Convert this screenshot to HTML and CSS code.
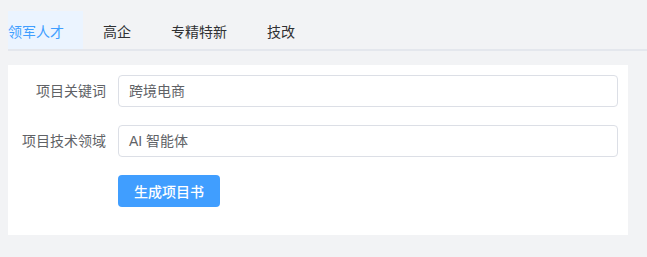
FILE: index.html
```html
<!DOCTYPE html>
<html lang="zh-CN">
<head>
<meta charset="utf-8">
<title>项目书生成</title>
<link rel="stylesheet" href="styles.css">
</head>
<body>
  <div class="page">
    <div class="tabs">
      <div class="tab active">领军人才</div>
      <div class="tab">高企</div>
      <div class="tab">专精特新</div>
      <div class="tab">技改</div>
    </div>
    <div class="card">
      <div class="form-item">
        <label class="label">项目关键词</label>
        <div class="input">跨境电商</div>
      </div>
      <div class="form-item">
        <label class="label">项目技术领域</label>
        <div class="input">AI 智能体</div>
      </div>
      <div class="form-item">
        <span class="label"></span>
        <button class="btn">生成项目书</button>
      </div>
    </div>
  </div>
</body>
</html>
```

FILE: styles.css
```css
html, body {
  margin: 0;
  padding: 0;
  background: #f2f3f5;
}
body {
  font-family: "Liberation Sans", "Noto Sans CJK SC", sans-serif;
  font-size: 14px;
  color: #303133;
}
.page {
  padding: 11px 19px 0 8px;
}
.tabs {
  display: flex;
  height: 40px;
  box-shadow: inset 0 -2px 0 #e4e7ed;
  margin-right: -19px;
}
.tab {
  height: 40px;
  line-height: 42px;
  padding: 0 20px;
  box-sizing: border-box;
  white-space: nowrap;
  color: #303133;
}
.tab:first-child {
  padding-left: 0;
  padding-right: 19px;
}
.tab.active {
  color: #409eff;
  background-color: #ebf4ff;
  box-shadow: inset 0 -2px 0 #e4e7ed;
  background-image: linear-gradient(#409eff, #409eff);
  background-size: 56px 2px;
  background-position: left bottom;
  background-repeat: no-repeat;
}
.card {
  margin-top: 14px;
  background: #fff;
  padding: 10px;
}
.form-item {
  display: flex;
  align-items: center;
  margin-bottom: 18px;
}
.label {
  width: 110px;
  flex: none;
  text-align: right;
  padding-right: 12px;
  box-sizing: border-box;
  color: #606266;
  line-height: 32px;
  margin-left: -10px;
}
.input {
  flex: 1;
  height: 32px;
  line-height: 30px;
  box-sizing: border-box;
  border: 1px solid #dcdfe6;
  border-radius: 4px;
  padding: 0 10px;
  color: #606266;
}
.btn {
  width: 102px;
  height: 32px;
  border: none;
  border-radius: 4px;
  background: #409eff;
  color: #fff;
  font-family: inherit;
  font-size: 14px;
  font-weight: 500;
  padding: 0;
  cursor: pointer;
}
```
